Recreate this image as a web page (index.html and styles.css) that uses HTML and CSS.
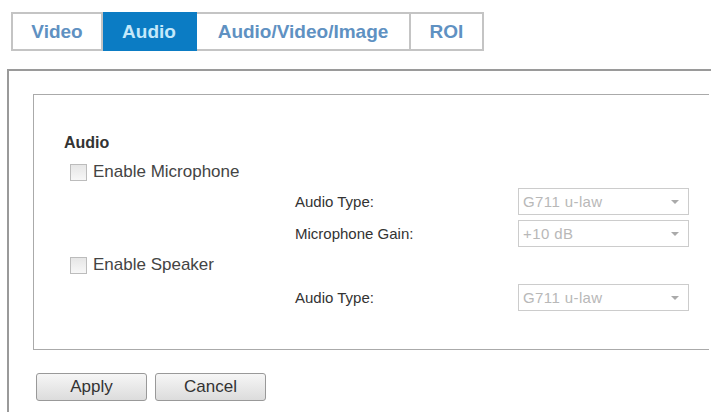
FILE: index.html
```html
<!DOCTYPE html>
<html>
<head lang="en">
    <meta charset="UTF-8">
    <title>Audio settings</title>
    <link rel="stylesheet" href="styles.css">
</head>
<body>
    <div class="tabs">
        <p class="tab t-video">Video</p>
        <p class="tab t-audio hover">Audio</p>
        <p class="tab t-avi">Audio/Video/Image</p>
        <p class="tab t-roi">ROI</p>
    </div>
    <div class="panel">
        <div class="box">
            <h3>Audio</h3>
            <label class="chk-row"><span class="chk"></span>Enable Microphone</label>
            <div class="field f1">
                <span class="lbl">Audio Type:</span>
                <span class="sel">G711 u-law<i></i></span>
            </div>
            <div class="field f2">
                <span class="lbl">Microphone Gain:</span>
                <span class="sel">+10 dB<i></i></span>
            </div>
            <label class="chk-row c2"><span class="chk"></span>Enable Speaker</label>
            <div class="field f3">
                <span class="lbl">Audio Type:</span>
                <span class="sel">G711 u-law<i></i></span>
            </div>
        </div>
        <div class="btns">
            <input type="button" value="Apply">
            <input type="button" value="Cancel">
        </div>
    </div>
</body>
</html>
```

FILE: styles.css
```css
body,p,h3 { margin: 0; padding: 0;}
body {
    background: #fff;
    font-family: "Liberation Sans", Arial, sans-serif;
    color: #333;
}
.tabs {
    display: flex;
    margin: 12px 0 0 11px;
    height: 39px;
}
.tab {
    box-sizing: border-box;
    height: 39px;
    line-height: 35px;
    text-align: center;
    font-size: 19px;
    font-weight: bold;
    color: #5f91c2;
    border: 2px solid #c4c4c4;
    border-left: none;
}
.t-video { width: 92px; border-left: 2px solid #c4c4c4;}
.t-audio { width: 94px;}
.t-avi { width: 214px;}
.t-roi { width: 73px;}
.hover {
    background-color: #0b7cc4;
    border-color: #0b7cc4;
    color: #c4e8fa;
}
.panel {
    width: 678px;
    min-height: 318px;
    margin: 18px 0 0 7px;
    padding: 23px 0 0 24px;
    border-top: 2px solid #9a9a9a;
    border-left: 2px solid #9a9a9a;
}
.box {
    box-sizing: border-box;
    width: 676px;
    padding: 39px 0 38px 30px;
    border: 1px solid #aaa;
    border-right: none;
}
.box h3 {
    height: 18px;
    line-height: 18px;
    font-size: 16px;
    font-weight: bold;
    color: #333;
}
.chk-row {
    display: flex;
    align-items: center;
    height: 20px;
    margin: 10px 0 0 6px;
    font-size: 17px;
    color: #444;
}
.chk-row.c2 { margin-top: 8px;}
.chk {
    box-sizing: border-box;
    width: 17px;
    height: 17px;
    margin-right: 6px;
    border: 1px solid #bcbcbc;
    background: linear-gradient(#e6e6e6, #f7f7f7);
}
.field {
    display: flex;
    align-items: center;
    height: 27px;
    margin-left: 231px;
    font-size: 15px;
}
.f1 { margin-top: 6px;}
.f2 { margin-top: 5px;}
.f3 { margin-top: 9px;}
.lbl {
    width: 223px;
    color: #333;
}
.sel {
    box-sizing: border-box;
    position: relative;
    width: 171px;
    height: 27px;
    line-height: 25px;
    padding-left: 4px;
    border: 1px solid #ccc;
    color: #b8b8b8;
    letter-spacing: 0.4px;
}
.sel i {
    position: absolute;
    right: 9px;
    top: 11px;
    border-left: 4px solid transparent;
    border-right: 4px solid transparent;
    border-top: 4px solid #aaa;
}
.btns {
    display: flex;
    gap: 8px;
    margin: 23px 0 0 3px;
}
.btns input[type=button] {
    width: 111px;
    height: 28px;
    border: 1px solid #999;
    border-radius: 3px;
    background: linear-gradient(#f6f6f6, #dcdcdc);
    font-family: "Liberation Sans", Arial, sans-serif;
    font-size: 17px;
    color: #333;
}
```
